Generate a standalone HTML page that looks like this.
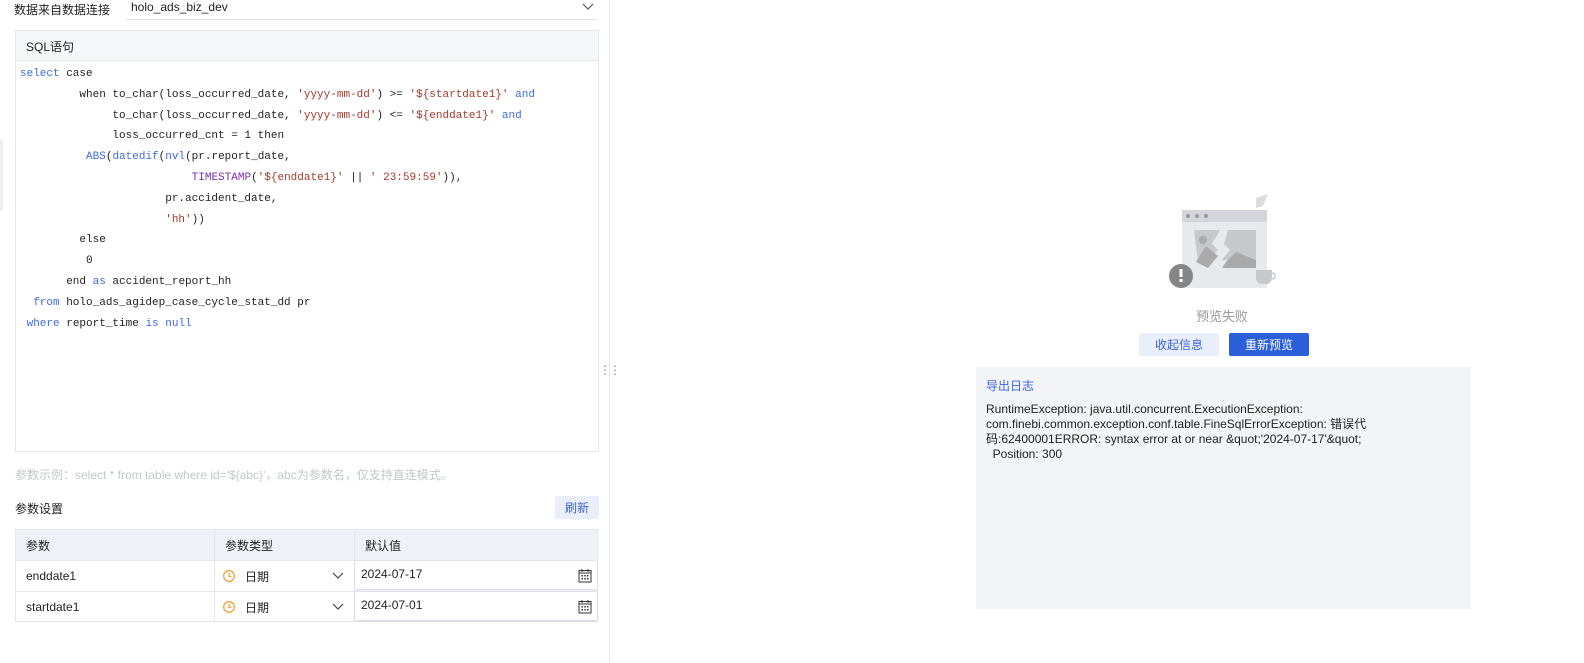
<!DOCTYPE html>
<html><head><meta charset="utf-8"><style>
*{margin:0;padding:0;box-sizing:border-box}
body{width:1584px;height:663px;background:#fff;font-family:"Liberation Sans","Noto Sans CJK SC",sans-serif;font-size:12px;color:#333;position:relative;overflow:hidden}
.a{position:absolute}
.code{font-family:"Liberation Mono","Noto Sans CJK SC",monospace;font-size:11px;white-space:pre;line-height:20.8px;color:#222}
.k{color:#3d6be0}.s{color:#a33a2c}.p{color:#7a2fb0}
.cell{position:absolute;display:flex;align-items:center;padding-left:11px;font-size:12px;color:#222}
</style></head><body>
<div class="a" style="left:0;top:140px;width:3px;height:70px;background:#eceef1"></div>
<div class="a" style="left:609px;top:0;width:1px;height:663px;background:#e8eaed"></div>
<div class="a" style="left:599px;top:363px;color:#888;font-size:12px;letter-spacing:-2px">⋮⋮</div>

<div class="a" style="left:14px;top:1px;font-size:12px;color:#222">数据来自数据连接</div>
<div class="a" style="left:126px;top:0;width:472px;height:20px;border-bottom:1px solid #e0e3e8"></div>
<div class="a" style="left:131px;top:0px;font-size:12px;color:#222">holo_ads_biz_dev</div>
<svg class="a" style="left:582px;top:3px" width="12" height="8"><path d="M1 1l5 5 5-5" fill="none" stroke="#555" stroke-width="1.2"/></svg>

<div class="a" style="left:15px;top:30px;width:584px;height:422px;border:1px solid #e3e6ea"></div>
<div class="a" style="left:16px;top:31px;width:582px;height:30px;background:#f6f7f9;border-bottom:1px solid #e3e6ea"></div>
<div class="a" style="left:26px;top:38px;font-size:12px;color:#222">SQL语句</div>
<div class="a code" style="left:20px;top:64px"><span class="k">select</span> case
         when to_char(loss_occurred_date, <span class="s">'yyyy-mm-dd'</span>) &gt;= <span class="s">'${startdate1}'</span> <span class="k">and</span>
              to_char(loss_occurred_date, <span class="s">'yyyy-mm-dd'</span>) &lt;= <span class="s">'${enddate1}'</span> <span class="k">and</span>
              loss_occurred_cnt = 1 then
          <span class="k">ABS</span>(<span class="k">datedif</span>(<span class="k">nvl</span>(pr.report_date,
                          <span class="p">TIMESTAMP</span>(<span class="s">'${enddate1}'</span> || <span class="s">' 23:59:59'</span>)),
                      pr.accident_date,
                      <span class="s">'hh'</span>))
         else
          0
       end <span class="k">as</span> accident_report_hh
  <span class="k">from</span> holo_ads_agidep_case_cycle_stat_dd pr
 <span class="k">where</span> report_time <span class="k">is</span> <span class="k">null</span></div>

<div class="a" style="left:15px;top:466px;font-size:12px;color:#c3c7cd">参数示例：select * from table where id='${abc}'，abc为参数名，仅支持直连模式。</div>
<div class="a" style="left:15px;top:500px;font-size:12px;color:#222">参数设置</div>
<div class="a" style="left:555px;top:496px;width:44px;height:23px;background:#e9eefa;color:#3d63d8;display:flex;align-items:center;justify-content:center;border-radius:2px">刷新</div>

<div class="a" style="left:15px;top:529px;width:583px;height:93px;border:1px solid #e3e6ea"></div>
<div class="a" style="left:16px;top:530px;width:581px;height:30px;background:#eef1f5"></div>
<div class="a" style="left:16px;top:560px;width:581px;height:1px;background:#e3e6ea"></div>
<div class="a" style="left:16px;top:591px;width:581px;height:1px;background:#e3e6ea"></div>
<div class="a" style="left:214px;top:530px;width:1px;height:91px;background:#e3e6ea"></div>
<div class="a" style="left:354px;top:530px;width:1px;height:91px;background:#e3e6ea"></div>
<div class="cell" style="left:15px;top:530px;height:30px">参数</div>
<div class="cell" style="left:214px;top:530px;height:30px">参数类型</div>
<div class="cell" style="left:354px;top:530px;height:30px">默认值</div>
<div class="cell" style="left:15px;top:561px;height:30px">enddate1</div>
<div class="cell" style="left:15px;top:592px;height:30px">startdate1</div>
<div class="a" style="left:355px;top:561px;width:242px;height:28px;box-shadow:0 1px 2px #ccd"></div>
<div class="a" style="left:355px;top:592px;width:242px;height:28px;box-shadow:0 1px 2px #ccd"></div>
<div class="cell" style="left:350px;top:560px;height:28px">2024-07-17</div>
<div class="cell" style="left:350px;top:591px;height:28px">2024-07-01</div>
<svg class="a" style="left:578px;top:569px" width="14" height="14"><rect x="1" y="1.5" width="12" height="11.5" fill="none" stroke="#333"/><path d="M1 4h12M4 0v3M10 0v3" stroke="#333"/><g fill="#333"><rect x="3.5" y="6" width="1.5" height="1.5"/><rect x="6.3" y="6" width="1.5" height="1.5"/><rect x="9" y="6" width="1.5" height="1.5"/><rect x="3.5" y="9" width="1.5" height="1.5"/><rect x="6.3" y="9" width="1.5" height="1.5"/><rect x="9" y="9" width="1.5" height="1.5"/></g></svg>
<svg class="a" style="left:578px;top:600px" width="14" height="14"><rect x="1" y="1.5" width="12" height="11.5" fill="none" stroke="#333"/><path d="M1 4h12M4 0v3M10 0v3" stroke="#333"/><g fill="#333"><rect x="3.5" y="6" width="1.5" height="1.5"/><rect x="6.3" y="6" width="1.5" height="1.5"/><rect x="9" y="6" width="1.5" height="1.5"/><rect x="3.5" y="9" width="1.5" height="1.5"/><rect x="6.3" y="9" width="1.5" height="1.5"/><rect x="9" y="9" width="1.5" height="1.5"/></g></svg>
<svg class="a" style="left:222px;top:569px" width="14" height="14"><circle cx="7" cy="7" r="5.3" fill="none" stroke="#f0a23c" stroke-width="1.3"/><path d="M7 4v3.5h2.5" fill="none" stroke="#f0a23c" stroke-width="1.3"/></svg>
<svg class="a" style="left:222px;top:600px" width="14" height="14"><circle cx="7" cy="7" r="5.3" fill="none" stroke="#f0a23c" stroke-width="1.3"/><path d="M7 4v3.5h2.5" fill="none" stroke="#f0a23c" stroke-width="1.3"/></svg>
<div class="a" style="left:245px;top:568px;color:#222">日期</div>
<div class="a" style="left:245px;top:599px;color:#222">日期</div>
<svg class="a" style="left:332px;top:572px" width="12" height="8"><path d="M1 1l5 5 5-5" fill="none" stroke="#444" stroke-width="1.2"/></svg>
<svg class="a" style="left:332px;top:603px" width="12" height="8"><path d="M1 1l5 5 5-5" fill="none" stroke="#444" stroke-width="1.2"/></svg>

<svg class="a" style="left:1160px;top:190px" width="125" height="100">
<path d="M96 8l12-4-5 12-7 2z" fill="#ddd"/>
<rect x="22" y="20" width="85" height="78" fill="#e8e9ec"/>
<rect x="22" y="20" width="85" height="12" fill="#d3d5da"/>
<circle cx="28" cy="26" r="2" fill="#999"/><circle cx="37" cy="26" r="2" fill="#999"/><circle cx="46" cy="26" r="2" fill="#999"/>
<path d="M34 40h26l-8 14 6 6-10 10-10 2z" fill="#c7c8cc"/>
<path d="M68 40h28v30h-34l8-10-6-6z" fill="#c7c8cc"/>
<circle cx="43" cy="50" r="4" fill="#aaa"/>
<path d="M36 72l10-16 12 10-10 12zM66 72l10-10 20 8v8h-34z" fill="#aaa"/>
<circle cx="21" cy="86" r="12" fill="#858585"/>
<rect x="19.5" y="79" width="3" height="8" fill="#fff"/><rect x="19.5" y="89" width="3" height="3" fill="#fff"/>
<path d="M96 80h16v8a6 6 0 0 1-6 6h-4a6 6 0 0 1-6-6z" fill="#c7c8cc"/>
<path d="M112 83a3 3 0 0 1 0 6" fill="none" stroke="#c7c8cc" stroke-width="1.5"/>
</svg>
<div class="a" style="left:1196px;top:306px;font-size:13px;color:#999">预览失败</div>
<div class="a" style="left:1139px;top:333px;width:80px;height:23px;background:#e8eefa;color:#3d63d8;display:flex;align-items:center;justify-content:center;border-radius:2px">收起信息</div>
<div class="a" style="left:1229px;top:333px;width:80px;height:23px;background:#2b5fd9;color:#fff;display:flex;align-items:center;justify-content:center;border-radius:2px">重新预览</div>

<div class="a" style="left:976px;top:367px;width:495px;height:242px;background:#f2f4f7"></div>
<div class="a" style="left:986px;top:377px;color:#3d63d8">导出日志</div>
<div class="a" style="left:986px;top:402px;width:400px;line-height:15px;color:#222">RuntimeException: java.util.concurrent.ExecutionException:<br>com.finebi.common.exception.conf.table.FineSqlErrorException: 错误代<br>码:62400001ERROR: syntax error at or near &amp;quot;'2024-07-17'&amp;quot;<br>&nbsp;&nbsp;Position: 300</div>
</body></html>
